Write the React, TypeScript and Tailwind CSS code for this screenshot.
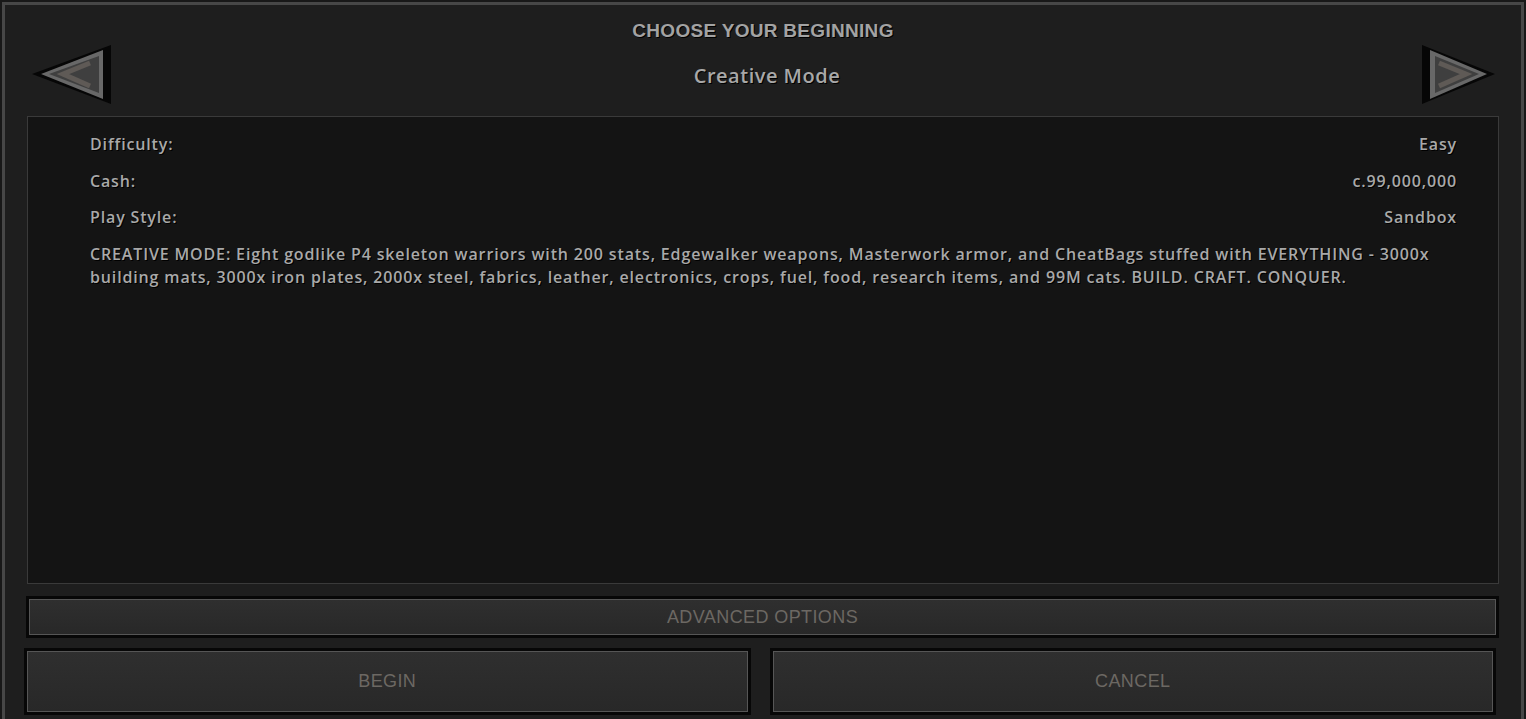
import React from "react";

const shadow = "[text-shadow:1px_1px_0_#000]";

function LeftArrow() {
  return (
    <svg width="84" height="64" viewBox="30 43 84 64" className="ml-[25px] mt-[38px]">
      <polygon points="32,74 111,45 111,104" fill="#060606" />
      <polygon points="41,74 103,50 103,99" fill="#686868" />
      <polygon points="49,74 99,56 99,93" fill="#3f3f3f" />
      <polyline points="90,63 63,74 90,86" fill="none" stroke="#5f5a56" strokeWidth="5" strokeLinejoin="miter" />
    </svg>
  );
}

function RightArrow() {
  return (
    <svg width="78" height="64" viewBox="1420 43 78 64" className="mr-[23px] mt-[38px]">
      <polygon points="1495,74 1422,45 1422,104" fill="#060606" />
      <polygon points="1487,74 1430,50 1430,99" fill="#686868" />
      <polygon points="1479,74 1435,56 1435,93" fill="#3f3f3f" />
      <polyline points="1439,63 1466,74 1439,86" fill="none" stroke="#5f5a56" strokeWidth="5" strokeLinejoin="miter" />
    </svg>
  );
}

function GameButton({ label, className }: { label: string; className: string }) {
  return (
    <div className={`border-[3px] border-[#070707] ${className}`}>
      <div className="flex h-full items-center justify-center border border-[#565656] bg-linear-to-b from-[#2f2f2f] to-[#282828]">
        <span className="font-['Liberation_Sans',Arial,sans-serif] text-[18px] tracking-[0.4px] text-[#6c6863]">
          {label}
        </span>
      </div>
    </div>
  );
}

const stats = [
  { label: "Difficulty:", value: "Easy" },
  { label: "Cash:", value: "c.99,000,000" },
  { label: "Play Style:", value: "Sandbox" },
];

export default function App() {
  return (
    <div className="h-[719px] w-[1526px] overflow-hidden bg-[#181818] p-[2px]">
      <div className="flex h-[760px] flex-col border-[3px] border-[#474747] bg-[#1e1e1e]">
        <div className="grid h-[111px] grid-cols-[1fr_auto_1fr] items-start">
          <div className="justify-self-start">
            <LeftArrow />
          </div>
          <div className="flex flex-col items-center pt-[14px]">
            <h1 className={`font-['Liberation_Sans',Arial,sans-serif] text-[19px] font-bold leading-[24px] tracking-[0.3px] text-[#a3a3a3] ${shadow}`}>
              CHOOSE YOUR BEGINNING
            </h1>
            <h2 className={`ml-[8px] mt-[20px] font-['Open_Sans',sans-serif] text-[20px] font-semibold leading-[26px] tracking-[0.5px] text-[#a8a8a8] ${shadow}`}>
              Creative Mode
            </h2>
          </div>
          <div className="justify-self-end">
            <RightArrow />
          </div>
        </div>

        <div className="mx-[22px] h-[468px] border border-[#3a3a3a] bg-[#141414] pl-[62px] pr-[41px] pt-[15px] font-['Open_Sans',sans-serif] text-[16px] font-semibold tracking-[0.85px] text-[#a9a9a9]">
          {stats.map((s) => (
            <div key={s.label} className={`flex h-[36.5px] justify-between leading-[24px] ${shadow}`}>
              <span>{s.label}</span>
              <span>{s.value}</span>
            </div>
          ))}
          <p className={`pt-[1px] leading-[23px] ${shadow}`}>
            CREATIVE MODE: Eight godlike P4 skeleton warriors with 200 stats, Edgewalker weapons, Masterwork armor, and CheatBags stuffed with EVERYTHING - 3000x
            <br />
            building mats, 3000x iron plates, 2000x steel, fabrics, leather, electronics, crops, fuel, food, research items, and 99M cats. BUILD. CRAFT. CONQUER.
          </p>
        </div>

        <GameButton label="ADVANCED OPTIONS" className="ml-[21px] mr-[22px] mt-[12px] h-[42px]" />

        <div className="ml-[19px] mr-[25px] mt-[10px] grid h-[67px] grid-cols-2 gap-[19px]">
          <GameButton label="BEGIN" className="h-full" />
          <GameButton label="CANCEL" className="h-full" />
        </div>
      </div>
    </div>
  );
}
